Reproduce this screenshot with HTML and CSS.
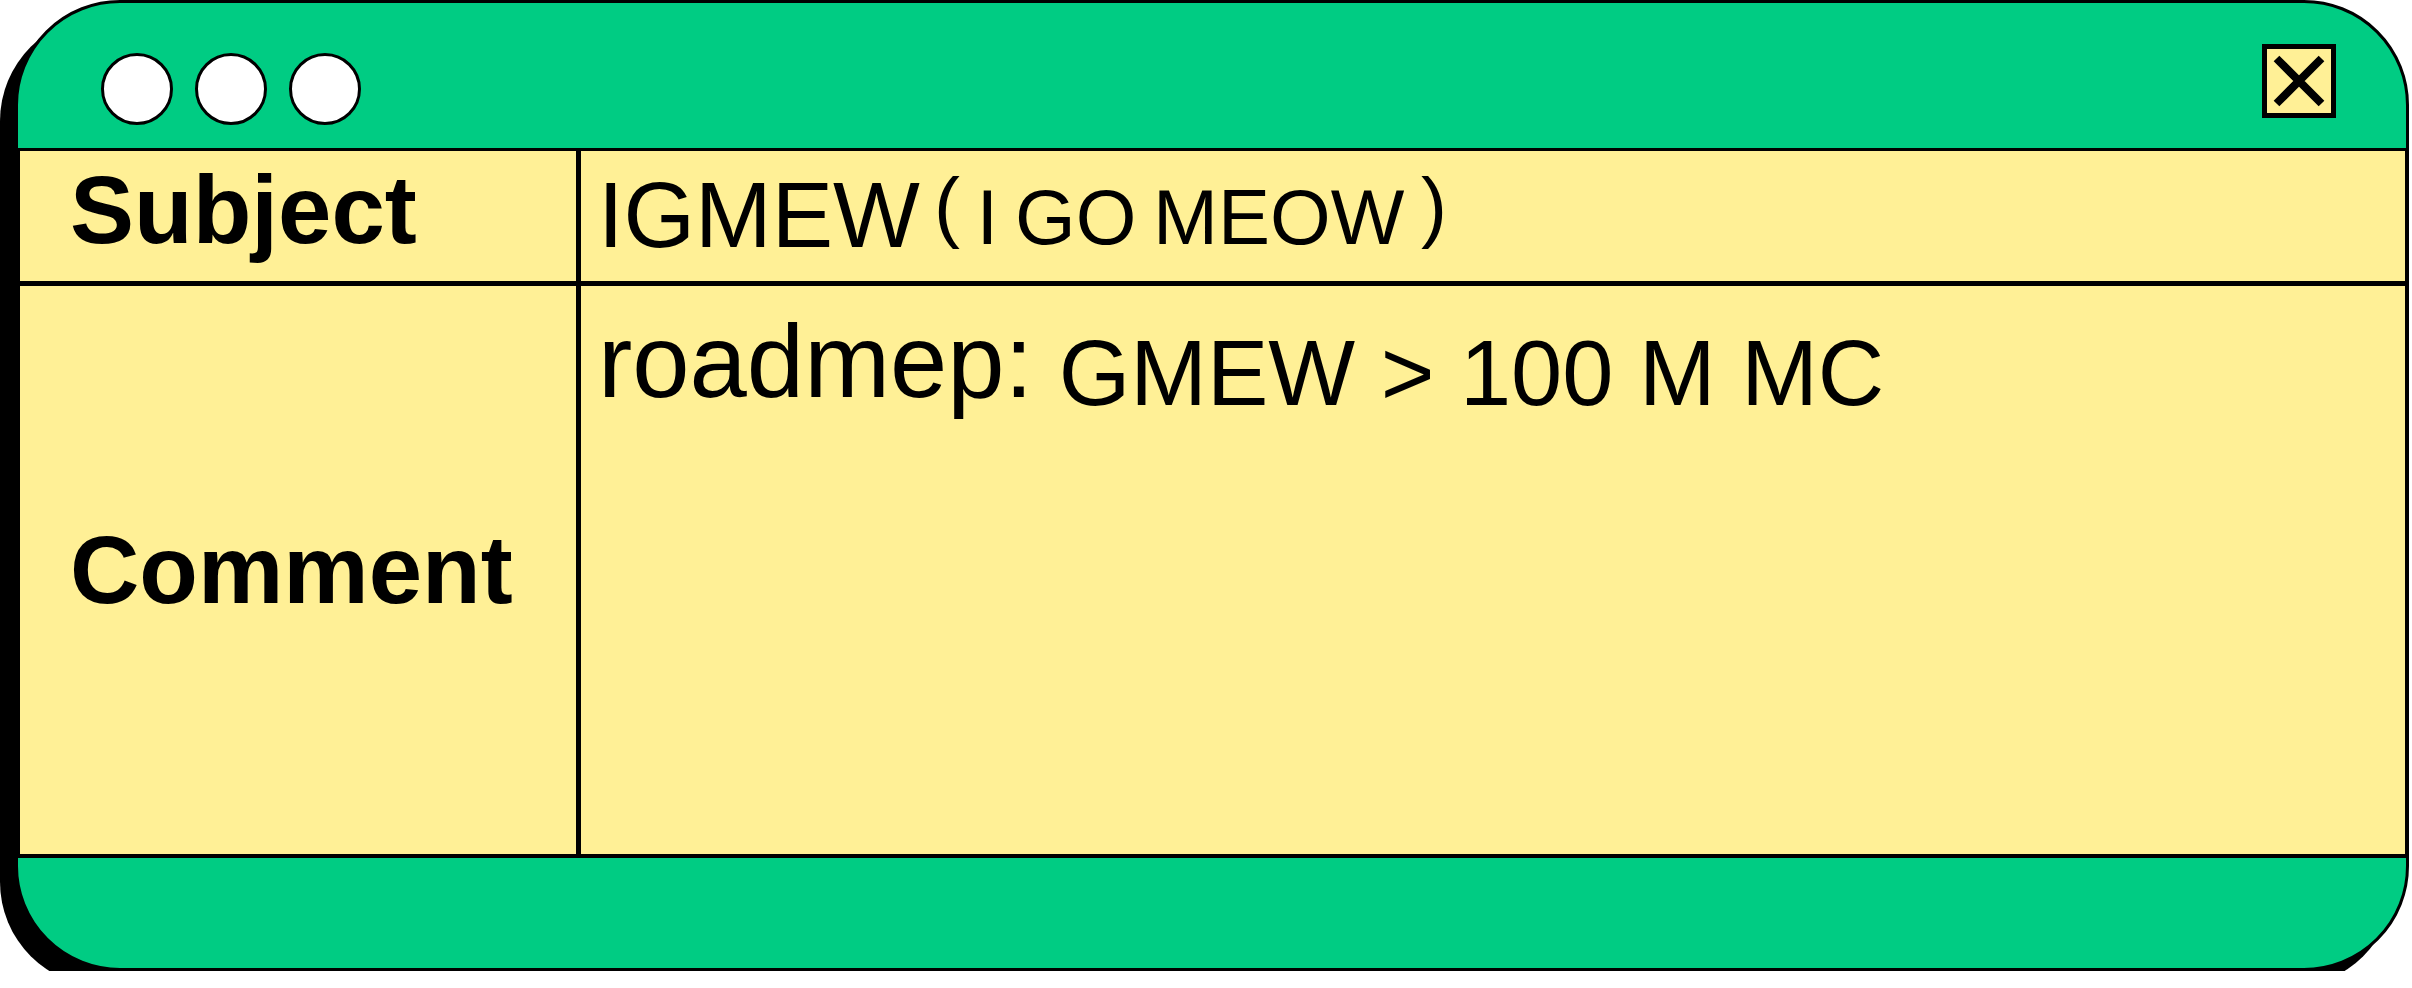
FILE: index.html
```html
<!DOCTYPE html>
<html lang="en">
<head>
  <meta charset="UTF-8">
  <title>IGMEW</title>
  <link rel="stylesheet" href="styles.css">
</head>
<body>

  <!-- Window -->
  <div class="window">
    <div class="title-bar">
      <div class="dots">
        <span class="dot"></span>
        <span class="dot"></span>
        <span class="dot"></span>
      </div>
      <button class="close" aria-label="Close">
        <svg viewBox="0 0 64 64" width="64" height="64">
          <path d="M9.5 9.5 L54.5 54.5 M54.5 9.5 L9.5 54.5" stroke="#000" stroke-width="8" fill="none"/>
        </svg>
      </button>
    </div>

    <!-- Subject / Comment sheet -->
    <div class="sheet">
      <div class="row row-subject">
        <div class="label">Subject</div>
        <div class="value">IGMEW<span class="aside"><span class="paren">(</span> I GO MEOW <span class="paren">)</span></span></div>
      </div>
      <div class="row row-comment">
        <div class="label">Comment</div>
        <div class="value">roadmep:<span class="big"> GMEW &gt; 100 M MC</span></div>
      </div>
    </div>

    <div class="footer"></div>
  </div>

</body>
</html>
```

FILE: styles.css
```css
* {
  box-sizing: border-box;
}

body {
  margin: 0;
  background: #fff;
  font-family: 'Liberation Sans', Arial, sans-serif;
  color: #000;
}

.window {
  margin-left: 15px;
  width: 2394px;
  height: 971px;
  display: flex;
  flex-direction: column;
  background: #00cc83;
  border: 3px solid #000;
  border-radius: 105px;
  box-shadow: -15px 16px 0 #000;
  overflow: hidden;
}

.title-bar {
  height: 148px;
  flex-shrink: 0;
  display: flex;
  justify-content: space-between;
  align-items: flex-start;
  padding: 0 70px 0 83px;
  border-bottom: 3px solid #000;
}

.dots {
  display: flex;
  gap: 22px;
  margin-top: 50px;
}

.dot {
  width: 72px;
  height: 72px;
  border: 3px solid #000;
  border-radius: 50%;
  background: #fff;
}

.close {
  width: 74px;
  height: 74px;
  margin-top: 41px;
  padding: 0;
  border: 5px solid #000;
  background: #fff096;
  cursor: pointer;
}

.close svg {
  display: block;
}

.sheet {
  height: 707px;
  flex-shrink: 0;
  display: flex;
  flex-direction: column;
  background: #fff096;
  border-left: 2px solid #000;
  border-right: 1px solid #000;
  border-bottom: 4px solid #000;
}

.row {
  display: flex;
}

.row-subject {
  height: 135px;
  border-bottom: 5px solid #000;
}

.row-comment {
  flex: 1;
}

.label {
  width: 561px;
  flex-shrink: 0;
  padding-left: 50px;
  border-right: 5px solid #000;
  font-size: 96px;
  font-weight: bold;
  white-space: nowrap;
}

.row-subject .label {
  padding-top: 4px;
}

.row-comment .label {
  display: flex;
  align-items: center;
}

.value {
  flex: 1;
  white-space: nowrap;
}

.row-subject .value {
  font-size: 92px;
  padding: 10px 17px 0;
}

.aside {
  font-size: 78px;
  margin-left: 14px;
  vertical-align: 3px;
  word-spacing: -5px;
}

.paren {
  vertical-align: 11px;
}

.row-comment .value {
  font-size: 103px;
  padding: 17px;
}

.big {
  font-size: 92px;
  vertical-align: -8px;
}

.footer {
  flex: 1;
}
```
